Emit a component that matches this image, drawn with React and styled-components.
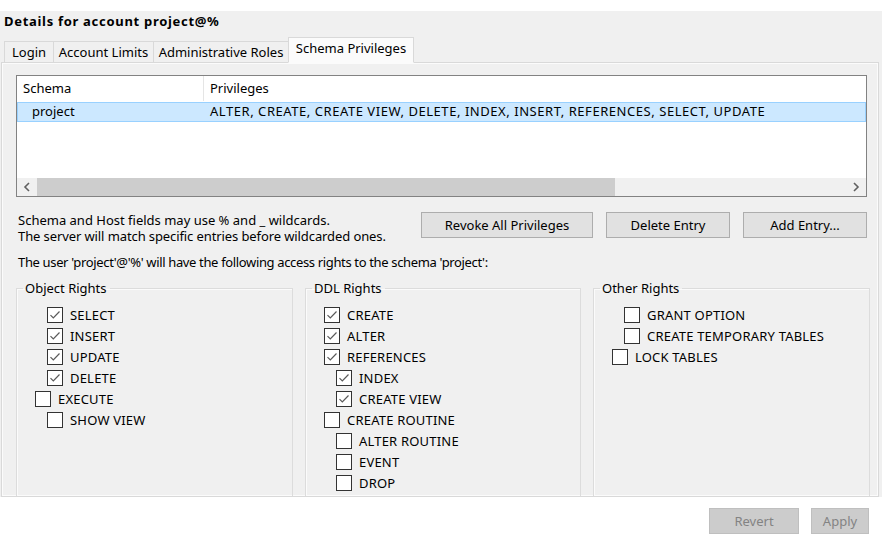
import React from 'react'
import styled, { createGlobalStyle } from 'styled-components'

const GlobalStyle = createGlobalStyle`
  html, body {
    margin: 0;
    padding: 0;
    background: #ffffff;
  }
  body {
    font-family: "Noto Sans", "DejaVu Sans", sans-serif;
    font-size: 13px;
    color: #000;
  }
`

const Page = styled.div`
  width: 882px;
  height: 546px;
  display: flex;
  flex-direction: column;
  padding-top: 11px;
  box-sizing: border-box;
`

const Window = styled.div`
  height: 486px;
  background: #f0f0f0;
  display: flex;
  flex-direction: column;
`

const Title = styled.div`
  font-weight: bold;
  height: 26px;
  line-height: 20px;
  padding-left: 4px;
  letter-spacing: 0.7px;
`

const TabBar = styled.div`
  display: flex;
  align-items: flex-end;
  height: 26px;
  padding-left: 4px;
  margin-bottom: -1px;
  position: relative;
  z-index: 1;
`

const Tab = styled.div`
  width: ${p => p.$width};
  height: ${p => (p.$active ? '26px' : '22px')};
  line-height: 21px;
  text-align: center;
  margin-left: ${p => (p.$active ? '-1px' : '0')};
  border: 1px solid #d9d9d9;
  border-left-width: ${p => (p.$first || p.$active ? '1px' : '0')};
  border-bottom-color: ${p => (p.$active ? '#fbfbfb' : '#d9d9d9')};
  background: ${p => (p.$active ? '#fbfbfb' : '#f0f0f0')};
  box-sizing: border-box;
  white-space: nowrap;
`

const Pane = styled.div`
  flex: 1;
  margin: 0 3px 0 1px;
  border: 1px solid #d9d9d9;
  box-shadow: inset 0 0 0 1px #fbfbfb;
  padding: 12px 11px 0 14px;
  display: flex;
  flex-direction: column;
  overflow: hidden;
  min-height: 0;
`

const Table = styled.div`
  height: 122px;
  border: 1px solid #828282;
  background: #ffffff;
  display: flex;
  flex-direction: column;
  box-sizing: border-box;
  flex-shrink: 0;
`

const HeaderRow = styled.div`
  display: flex;
  height: 25px;
  line-height: 25px;
`

const HeaderCell = styled.div`
  width: ${p => p.$width || 'auto'};
  flex: ${p => (p.$width ? 'none' : '1')};
  padding-left: 6px;
  border-right: ${p => (p.$sep ? '1px solid #e5e5e5' : 'none')};
  box-sizing: border-box;
`

const DataRow = styled.div`
  display: flex;
  height: 20px;
  line-height: 17px;
  margin: 1px 0 0 0;
  background: ${p => (p.$selected ? '#cce8ff' : 'transparent')};
  border: 1px solid ${p => (p.$selected ? '#99d1ff' : 'transparent')};
  box-sizing: border-box;
`

const Cell = styled.div`
  width: ${p => p.$width || 'auto'};
  flex: ${p => (p.$width ? 'none' : '1')};
  padding-left: ${p => p.$pad || '6px'};
  letter-spacing: ${p => p.$spacing || '0'};
  box-sizing: border-box;
  white-space: nowrap;
`

const TableBody = styled.div`
  flex: 1;
`

const HScroll = styled.div`
  height: 18px;
  background: #f0f0f0;
  display: flex;
  align-items: center;
`

const ScrollArrow = styled.div`
  width: 20px;
  height: 18px;
  display: flex;
  align-items: center;
  justify-content: center;
`

const ScrollTrack = styled.div`
  flex: 1;
  height: 18px;
  display: flex;
`

const ScrollThumb = styled.div`
  width: ${p => p.$width};
  background: #cdcdcd;
`

const InfoRow = styled.div`
  display: flex;
  justify-content: space-between;
  align-items: flex-start;
  margin-top: 15px;
`

const InfoText = styled.div`
  line-height: 16px;
  padding-left: 2px;
  letter-spacing: ${p => p.$spacing || '0'};
`

const ButtonGroup = styled.div`
  display: flex;
  gap: 13px;
`

const Button = styled.div`
  width: ${p => p.$width};
  height: 26px;
  line-height: 24px;
  text-align: center;
  background: ${p => (p.$disabled ? '#cccccc' : '#e1e1e1')};
  border: 1px solid ${p => (p.$disabled ? '#bfbfbf' : '#adadad')};
  color: ${p => (p.$disabled ? '#838383' : '#000')};
  box-sizing: border-box;
`

const AccessText = styled.div`
  margin-top: 10px;
  padding-left: 2px;
  line-height: 16px;
  letter-spacing: -0.35px;
`

const Groups = styled.div`
  display: grid;
  grid-template-columns: 277px 276px 277px;
  column-gap: 12px;
  margin-top: 11px;
`

const Group = styled.fieldset`
  margin: 0;
  padding: 9px 0 0 0;
  border: 1px solid #dcdcdc;
  box-shadow: inset 1px 1px 0 #fbfbfb;
  height: 240px;
  box-sizing: border-box;
  min-width: 0;
`

const Legend = styled.legend`
  margin-left: 6px;
  padding: 0 3px 0 2px;
  line-height: 14px;
`

const CheckRow = styled.div`
  display: flex;
  align-items: center;
  height: 21px;
  padding-left: ${p => 18 + p.$level * 12}px;
  letter-spacing: 0.2px;
  white-space: nowrap;
`

const Box = styled.div`
  width: 16px;
  height: 16px;
  border: 1px solid #333333;
  background: #ffffff;
  box-sizing: border-box;
  margin-right: 7px;
  display: flex;
  align-items: center;
  justify-content: center;
  flex-shrink: 0;
`

const Footer = styled.div`
  display: flex;
  justify-content: flex-end;
  gap: 12px;
  padding: 11px 13px 0 0;
`

function CheckMark() {
  return (
    <svg width="14" height="14" viewBox="0 0 14 14">
      <path d="M2.5 7.2 L5.3 10 L11.5 3.5" fill="none" stroke="#5a5a5a" strokeWidth="1.2" />
    </svg>
  )
}

function Check({ label, checked, level = 0 }) {
  return (
    <CheckRow $level={level}>
      <Box>{checked && <CheckMark />}</Box>
      {label}
    </CheckRow>
  )
}

const objectRights = [
  ['SELECT', true, 1],
  ['INSERT', true, 1],
  ['UPDATE', true, 1],
  ['DELETE', true, 1],
  ['EXECUTE', false, 0],
  ['SHOW VIEW', false, 1],
]

const ddlRights = [
  ['CREATE', true, 0],
  ['ALTER', true, 0],
  ['REFERENCES', true, 0],
  ['INDEX', true, 1],
  ['CREATE VIEW', true, 1],
  ['CREATE ROUTINE', false, 0],
  ['ALTER ROUTINE', false, 1],
  ['EVENT', false, 1],
  ['DROP', false, 1],
]

const otherRights = [
  ['GRANT OPTION', false, 1],
  ['CREATE TEMPORARY TABLES', false, 1],
  ['LOCK TABLES', false, 0],
]

function RightsGroup({ title, items }) {
  return (
    <Group>
      <Legend>{title}</Legend>
      {items.map(([label, checked, level]) => (
        <Check key={label} label={label} checked={checked} level={level} />
      ))}
    </Group>
  )
}

export default function App() {
  return (
    <Page>
      <GlobalStyle />
      <Window>
        <Title>Details for account project@%</Title>
        <TabBar>
          <Tab $first $width="50px">Login</Tab>
          <Tab $width="100px">Account Limits</Tab>
          <Tab $width="135px">Administrative Roles</Tab>
          <Tab $active $width="126px">Schema Privileges</Tab>
        </TabBar>
        <Pane>
          <Table>
            <HeaderRow>
              <HeaderCell $width="187px" $sep>Schema</HeaderCell>
              <HeaderCell>Privileges</HeaderCell>
            </HeaderRow>
            <TableBody>
              <DataRow $selected>
                <Cell $width="186px" $pad="14px">project</Cell>
                <Cell $spacing="0.55px">ALTER, CREATE, CREATE VIEW, DELETE, INDEX, INSERT, REFERENCES, SELECT, UPDATE</Cell>
              </DataRow>
            </TableBody>
            <HScroll>
              <ScrollArrow>
                <svg width="8" height="10" viewBox="0 0 8 10">
                  <path d="M6 1 L2 5 L6 9" fill="none" stroke="#606060" strokeWidth="1.6" />
                </svg>
              </ScrollArrow>
              <ScrollTrack>
                <ScrollThumb $width="578px" />
              </ScrollTrack>
              <ScrollArrow>
                <svg width="8" height="10" viewBox="0 0 8 10">
                  <path d="M2 1 L6 5 L2 9" fill="none" stroke="#606060" strokeWidth="1.6" />
                </svg>
              </ScrollArrow>
            </HScroll>
          </Table>
          <InfoRow>
            <div>
              <InfoText>Schema and Host fields may use % and _ wildcards.</InfoText>
              <InfoText $spacing="-0.1px">The server will match specific entries before wildcarded ones.</InfoText>
            </div>
            <ButtonGroup>
              <Button $width="172px">Revoke All Privileges</Button>
              <Button $width="124px">Delete Entry</Button>
              <Button $width="124px">Add Entry...</Button>
            </ButtonGroup>
          </InfoRow>
          <AccessText>The user 'project'@'%' will have the following access rights to the schema 'project':</AccessText>
          <Groups>
            <RightsGroup title="Object Rights" items={objectRights} />
            <RightsGroup title="DDL Rights" items={ddlRights} />
            <RightsGroup title="Other Rights" items={otherRights} />
          </Groups>
        </Pane>
      </Window>
      <Footer>
        <Button $width="90px" $disabled>Revert</Button>
        <Button $width="58px" $disabled>Apply</Button>
      </Footer>
    </Page>
  )
}
